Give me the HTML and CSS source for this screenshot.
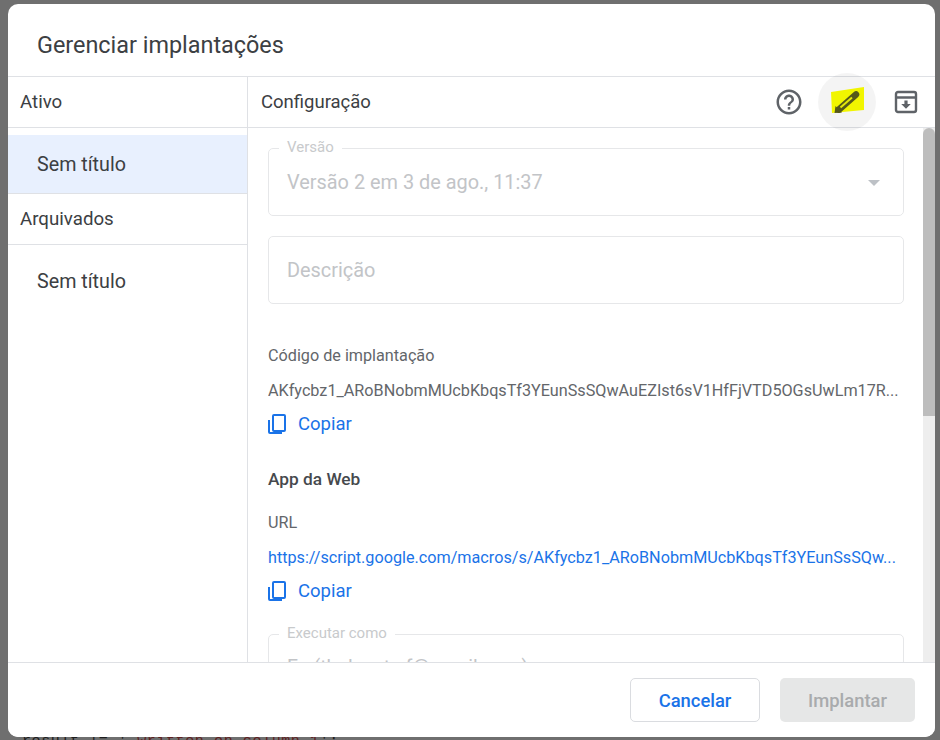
FILE: index.html
```html
<!DOCTYPE html>
<html lang="pt-BR">
<head>
<meta charset="utf-8">
<title>Gerenciar implantações</title>
<link rel="stylesheet" href="styles.css">
</head>
<body>
<div class="backdrop-code">result != ' <span class="code-str">written on column 1</span>';</div>
<main class="dialog">
  <header class="dialog-header"><h1>Gerenciar implantações</h1></header>
  <div class="dialog-body">
    <nav class="sidebar">
      <div class="side-head">Ativo</div>
      <div class="side-list"><div class="side-item selected">Sem título</div></div>
      <div class="side-head">Arquivados</div>
      <div class="side-list"><div class="side-item">Sem título</div></div>
    </nav>
    <section class="panel">
      <div class="panel-head">
        <span class="panel-title">Configuração</span>
        <div class="panel-actions">
          <span class="icon-btn">
            <svg width="30" height="30" viewBox="0 0 24 24" fill="#5f6368"><path d="M11 18h2v-2h-2v2zm1-16C6.48 2 2 6.48 2 12s4.48 10 10 10 10-4.48 10-10S17.52 2 12 2zm0 18c-4.41 0-8-3.59-8-8s3.59-8 8-8 8 3.59 8 8-3.59 8-8 8zm0-14c-2.21 0-4 1.79-4 4h2c0-1.1.9-2 2-2s2 .9 2 2c0 2-3 1.75-3 5h2c0-2.25 3-2.5 3-5 0-2.21-1.79-4-4-4z"/></svg>
          </span>
          <span class="icon-btn active">
            <svg class="pencil" width="58" height="58" viewBox="0 0 58 58">
              <polygon points="13,19 46,14 46,37 14,40" fill="#f1f500"/>
              <path d="M21 36.500 38 21.500" stroke="#55581a" stroke-width="6.500" stroke-linecap="round" fill="none"/>
              <path d="M22.500 34.500 34 24.500" stroke="#e4e80a" stroke-width="2" fill="none"/>
              <polygon points="16.500,40 17.500,33 24,39.500" fill="#55581a"/>
            </svg>
          </span>
          <span class="icon-btn">
            <svg width="24" height="24" viewBox="0 0 24 24">
              <rect x="2" y="2" width="20" height="20" rx="2" fill="none" stroke="#5f6368" stroke-width="2.400"/>
              <path d="M2 7.500H22" stroke="#5f6368" stroke-width="2.400"/>
              <polygon points="10.400,10.500 13.600,10.500 13.600,14 16.800,14 12,18.800 7.200,14 10.400,14" fill="#5f6368"/>
            </svg>
          </span>
        </div>
      </div>
      <div class="panel-scroll">
        <div class="panel-content">
          <div class="field disabled has-select">
            <span class="field-label">Versão</span>
            <span class="field-value">Versão 2 em 3 de ago., 11:37</span>
            <span class="caret"></span>
          </div>
          <div class="field disabled plain">
            <span class="field-value">Descrição</span>
          </div>
          <div class="info-label first">Código de implantação</div>
          <div class="info-value">AKfycbz1_ARoBNobmMUcbKbqsTf3YEunSsSQwAuEZIst6sV1HfFjVTD5OGsUwLm17R...</div>
          <a class="copy">
            <svg width="20" height="22" viewBox="0 0 20 22" fill="none" stroke="#1a73e8" stroke-width="2"><rect x="5" y="2" width="12" height="16" rx="1"/><path d="M1 7V19a1 1 0 0 0 1 1H14"/></svg>
            <span>Copiar</span>
          </a>
          <div class="section-title">App da Web</div>
          <div class="info-label url">URL</div>
          <div class="info-value link">https://script.google.com/macros/s/AKfycbz1_ARoBNobmMUcbKbqsTf3YEunSsSQw...</div>
          <a class="copy">
            <svg width="20" height="22" viewBox="0 0 20 22" fill="none" stroke="#1a73e8" stroke-width="2"><rect x="5" y="2" width="12" height="16" rx="1"/><path d="M1 7V19a1 1 0 0 0 1 1H14"/></svg>
            <span>Copiar</span>
          </a>
          <div class="field disabled run-as">
            <span class="field-label">Executar como</span>
            <span class="field-value">Eu (thalesnt.sf@gmail.com)</span>
          </div>
        </div>
        <div class="scrollbar"><div class="scroll-thumb"></div></div>
      </div>
    </section>
  </div>
  <footer class="dialog-footer">
    <button class="btn btn-cancel">Cancelar</button>
    <button class="btn btn-deploy">Implantar</button>
  </footer>
</main>
</body>
</html>
```

FILE: styles.css
```css
* { box-sizing: border-box; }
html, body { height: 100%; }
body {
  margin: 0;
  width: 940px;
  height: 740px;
  overflow: hidden;
  background: #6f6f6f;
  padding: 4px 5px 3px 8px;
  font-family: Roboto, "Liberation Sans", sans-serif;
  position: relative;
}
.backdrop-code {
  position: absolute;
  left: 22px;
  top: 734px;
  font: 15px/16px "Liberation Mono", monospace;
  color: #1c1c1c;
  letter-spacing: .6px;
  white-space: pre;
}
.code-str { color: #5f1f1f; }
.dialog {
  position: relative;
  width: 927px;
  height: 733px;
  background: #fff;
  border-radius: 10px;
  display: flex;
  flex-direction: column;
  overflow: hidden;
}
.dialog-header {
  height: 73px;
  flex: none;
  padding: 0 29px;
  display: flex;
  align-items: center;
  border-bottom: 1px solid #dfe1e5;
}
.dialog-header h1 {
  margin: 10px 0 0;
  font-size: 23.400px;
  font-weight: 400;
  color: #3c4043;
}
.dialog-body { flex: 1; min-height: 0; display: flex; }
.sidebar {
  width: 240px;
  flex: none;
  border-right: 1px solid #dfe1e5;
}
.side-head {
  height: 51px;
  padding: 0 12px 1px;
  display: flex;
  align-items: center;
  font-size: 18.700px;
  color: #3c4043;
  border-bottom: 1px solid #dfe1e5;
}
.side-list { padding-top: 7px; border-bottom: 1px solid #dfe1e5; }
.side-list:last-child { border-bottom: 0; }
.side-item {
  height: 58px;
  padding: 0 29px;
  display: flex;
  align-items: center;
  font-size: 19.700px;
  color: #3c4043;
}
.side-item.selected { background: #e8f0fe; }
.panel { flex: 1; min-width: 0; display: flex; flex-direction: column; }
.panel-head {
  height: 51px;
  flex: none;
  padding: 0 0 0 13px;
  display: flex;
  align-items: center;
  justify-content: space-between;
  border-bottom: 1px solid #dfe1e5;
}
.panel-title { font-size: 18.500px; color: #3c4043; padding-bottom: 1px; }
.panel-actions { display: flex; align-items: center; }
.icon-btn {
  width: 58px;
  height: 58px;
  border-radius: 50%;
  display: flex;
  align-items: center;
  justify-content: center;
  position: relative;
}
.icon-btn:last-child { width: 59px; }
.icon-btn.active { background: rgba(0, 0, 0, .045); }
.panel-scroll {
  flex: 1;
  min-height: 0;
  display: flex;
  overflow: hidden;
}
.panel-content {
  width: 675px;
  flex: none;
  padding: 20px 0 0 20px;
  overflow: hidden;
}
.field {
  position: relative;
  width: 636px;
  height: 68px;
  border: 1px solid #e6e7e9;
  border-radius: 5px;
  display: flex;
  align-items: center;
  padding: 0 18px;
  font-size: 19.900px;
  color: #c2c4c7;
}
.plain { margin-top: 20px; }
.field-label {
  position: absolute;
  left: 10px;
  top: -12px;
  padding: 0 8px;
  background: #fff;
  font-size: 15px;
  line-height: 20px;
  color: #c8cacc;
}
.caret {
  position: absolute;
  right: 23px;
  top: 31px;
  border-left: 6px solid transparent;
  border-right: 6px solid transparent;
  border-top: 6px solid #bdc1c6;
}
.info-label { font-size: 16.200px; line-height: 20px; color: #63666a; }
.info-label.first { margin-top: 42px; }
.info-label.url { margin-top: 22px; }
.info-value {
  margin-top: 15px;
  font-size: 16.200px;
  line-height: 20px;
  color: #63666a;
  white-space: nowrap;
  width: 636px;
  overflow: hidden;
}
.info-value.link { color: #1a73e8; }
.copy {
  display: flex;
  align-items: center;
  gap: 10px;
  margin-top: 11px;
  height: 24px;
  font-size: 18.500px;
  color: #1a73e8;
}
.section-title {
  margin-top: 31px;
  font-size: 17.300px;
  line-height: 24px;
  font-weight: 500;
  color: #46494d;
}
.run-as { margin-top: 31px; align-items: flex-start; padding-top: 21px; font-size: 19.500px; }
.scrollbar {
  width: 12px;
  flex: none;
  background: #eeeeee;
}
.scroll-thumb {
  width: 12px;
  height: 288px;
  background: #bdbdbd;
  border-radius: 6px 6px 0 0;
}
.dialog-footer {
  height: 75px;
  flex: none;
  border-top: 1px solid #dfe1e5;
  display: flex;
  justify-content: flex-end;
  align-items: center;
  gap: 20px;
  padding: 0 20px 0 0;
  background: #fff;
}
.btn {
  height: 44px;
  border-radius: 5px;
  font-family: Roboto, "Liberation Sans", sans-serif;
  font-size: 18.400px;
  font-weight: 500;
  padding: 0;
}
.btn-cancel {
  width: 130px;
  background: #fff;
  border: 1px solid #dadce0;
  color: #1a73e8;
}
.btn-deploy {
  width: 135px;
  background: #e6e7e7;
  border: 0;
  color: #a9abad;
}
```
